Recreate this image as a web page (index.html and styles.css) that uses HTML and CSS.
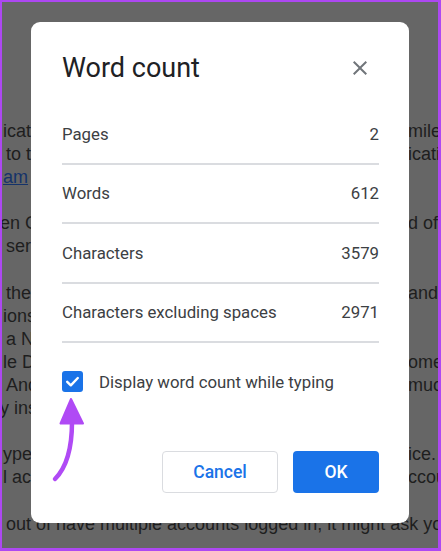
FILE: index.html
```
<!DOCTYPE html>
<html lang="en">

<head>
    <meta charset="UTF-8">
    <meta name="viewport" content="width=device-width, initial-scale=1.0">
    <title>Word count</title>
    <link rel="stylesheet" href="styles.css">
</head>

<body>

    <div class="screen">
        <!-- document behind the dialog -->
        <div class="doc">
            <div class="line"><span class="l">icat</span><span class="r">miles</span></div>
            <div class="line"><span class="l indent">to th</span><span class="r">ication</span></div>
            <div class="line"><span class="l"><a href="#" class="link">am</a></span><span class="r"></span></div>
            <div class="line"></div>
            <div class="line"><span class="l cut">en G</span><span class="r">d of the</span></div>
            <div class="line"><span class="l indent">ser</span><span class="r"></span></div>
            <div class="line"></div>
            <div class="line"><span class="l indent">the</span><span class="r">and</span></div>
            <div class="line"><span class="l">ions</span><span class="r"></span></div>
            <div class="line"><span class="l indent">a N</span><span class="r"></span></div>
            <div class="line"><span class="l">le D</span><span class="r">ome</span></div>
            <div class="line"><span class="l indent">And</span><span class="r">much</span></div>
            <div class="line"><span class="l cut">y ins</span><span class="r"></span></div>
            <div class="line"></div>
            <div class="line"><span class="l">ype</span><span class="r">ice.</span></div>
            <div class="line"><span class="l">l acc</span><span class="r">ccount</span></div>
            <div class="line"></div>
            <div class="line"><span class="l indent">out of have multiple accounts logged in, it might ask you</span></div>
        </div>

        <div class="dialog">
            <div class="dialog-header">
                <h1>Word count</h1>
                <button class="close" aria-label="Close">
                    <svg width="24" height="24" viewBox="0 0 24 24">
                        <path d="M19 6.41L17.59 5 12 10.59 6.41 5 5 6.41 10.59 12 5 17.59 6.41 19 12 13.41 17.59 19 19 17.59 13.41 12z" fill="#70757a"/>
                    </svg>
                </button>
            </div>

            <div class="stat"><span>Pages</span><span>2</span></div>
            <div class="stat"><span>Words</span><span>612</span></div>
            <div class="stat"><span>Characters</span><span>3579</span></div>
            <div class="stat"><span>Characters excluding spaces</span><span>2971</span></div>

            <label class="check-row">
                <span class="checkbox">
                    <svg width="21" height="21" viewBox="0 0 21 21">
                        <path d="M5.2 10.8 L8.8 14.3 L15.8 7" fill="none" stroke="#fff" stroke-width="2.4" stroke-linecap="round" stroke-linejoin="round"/>
                    </svg>
                </span>
                Display word count while typing
            </label>

            <div class="actions">
                <button class="btn btn-cancel">Cancel</button>
                <button class="btn btn-ok">OK</button>
            </div>
        </div>

        <!-- annotation arrow -->
        <svg class="arrow" width="60" height="100" viewBox="0 0 60 100">
            <path d="M30 30 C30 58 24 76 13 87" fill="none" stroke="#b04af5" stroke-width="4.5" stroke-linecap="round"/>
            <path d="M29 7 L18.5 31.5 L41 31.5 Z" fill="#b04af5" stroke="#b04af5" stroke-width="2" stroke-linejoin="round"/>
        </svg>
    </div>

</body>

</html>
```

FILE: styles.css
```
* {
    margin: 0;
    padding: 0;
    box-sizing: border-box;
}

html {
    background-color: #ad48f2;
}

body {
    margin: 0;
    font-family: Roboto, "Liberation Sans", Arial, sans-serif;
}

.screen {
    position: relative;
    margin: 2px 3px 3px 2px;
    height: 546px;
    background-color: #666666;
    overflow: hidden;
}

/* dimmed document */
.doc {
    padding-top: 118px;
    padding-left: 1px;
    font-family: "Liberation Sans", Arial, sans-serif;
    font-size: 18px;
    color: #1e1e1e;
}

.line {
    display: flex;
    height: 23.1px;
    line-height: 23.1px;
    white-space: nowrap;
}

.line .l {
    flex: 1;
}

.line .r {
    width: 30px;
    overflow: visible;
}

.indent {
    padding-left: 3px;
}

.cut {
    margin-left: -3px;
}

.link {
    color: #15336a;
    text-decoration: underline;
}

/* dialog */
.dialog {
    position: absolute;
    left: 29px;
    top: 20px;
    width: 378px;
    height: 501px;
    background-color: #ffffff;
    border-radius: 9px;
    padding: 30px 30px 30px 31px;
    display: flex;
    flex-direction: column;
}

.dialog-header {
    height: 32px;
    margin-bottom: 21px;
    display: flex;
    align-items: center;
    justify-content: space-between;
}

h1 {
    font-family: Roboto, sans-serif;
    font-weight: 400;
    font-size: 27px;
    line-height: 32px;
    color: #202124;
}

.close {
    background: none;
    border: none;
    width: 24px;
    height: 24px;
    margin-right: 7px;
    display: flex;
}

.stat {
    height: 59.5px;
    border-bottom: 2px solid #dadce0;
    display: flex;
    align-items: center;
    justify-content: space-between;
    font-size: 16.8px;
    color: #3c4043;
}

.check-row {
    margin-top: 28px;
    height: 21px;
    display: flex;
    align-items: center;
    gap: 16px;
    font-size: 16.8px;
    color: #3c4043;
}

.checkbox {
    width: 21px;
    height: 21px;
    border-radius: 3px;
    background-color: #1a73e8;
    display: flex;
}

.actions {
    margin-top: auto;
    display: flex;
    justify-content: flex-end;
    gap: 15px;
}

.btn {
    height: 42px;
    border-radius: 4px;
    font-family: Roboto, sans-serif;
    font-size: 17.5px;
    font-weight: 500;
    cursor: pointer;
}

.btn-cancel {
    width: 116px;
    background-color: #ffffff;
    border: 1px solid #dadce0;
    color: #1a73e8;
}

.btn-ok {
    width: 86px;
    background-color: #1a73e8;
    border: none;
    color: #ffffff;
}

/* annotation */
.arrow {
    position: absolute;
    left: 40px;
    top: 390px;
}
```
